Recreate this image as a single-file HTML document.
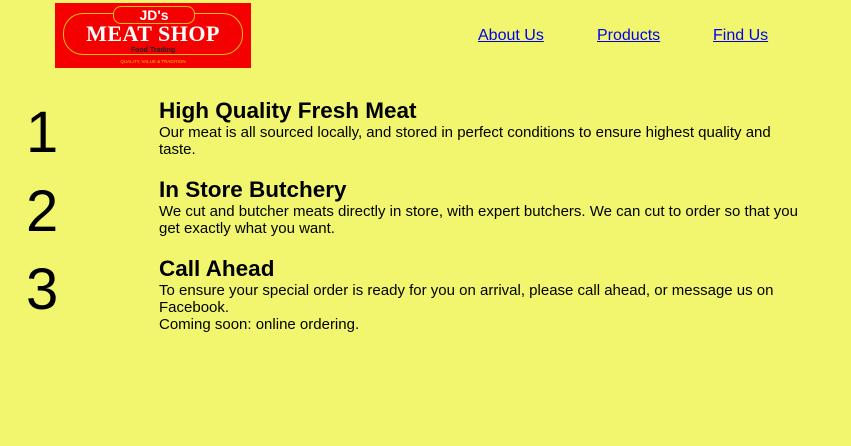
<!DOCTYPE html>
<html><head><meta charset="utf-8"><style>
body{margin:0;width:851px;height:446px;background:#f1f66e;font-family:"Liberation Sans",Arial,sans-serif;position:relative;overflow:hidden;color:#000}
.logo{position:absolute;left:55px;top:3px;width:196px;height:65px;background:#f40000;}
.oval{position:absolute;left:8px;top:10px;width:178px;height:40px;border:1px solid #f5c000;border-radius:20px}
.top{position:absolute;left:58px;top:3px;width:80px;height:16px;border:1px solid #f5c000;border-radius:8px;background:#f40000;color:#fff;font-weight:bold;font-size:14px;text-align:center;line-height:16px}
.ms{position:absolute;left:0;width:196px;top:19px;text-align:center;color:#fff;font-family:"Liberation Serif",serif;font-weight:bold;font-size:22px;letter-spacing:0.5px;line-height:24px}
.ft{position:absolute;left:0;width:196px;top:44px;text-align:center;color:#222;font-size:7px;font-weight:bold}
.q{position:absolute;left:0;width:196px;top:56px;text-align:center;color:#f5c000;font-size:4.5px}
nav a{position:absolute;top:27px;font-size:16px;color:#0000ee;text-decoration:underline}
.n{position:absolute;left:26px;font-size:58px;line-height:58px}
.s{position:absolute;left:159px;width:645px}
.s h2{margin:0;font-size:22.5px;font-weight:bold;line-height:26px}
.s p{margin:0;font-size:15px;line-height:17px}
</style></head><body>
<div class="logo"><div class="oval"></div><div class="top">JD's</div><div class="ms">MEAT SHOP</div><div class="ft">Food Trading</div><div class="q">QUALITY, VALUE &amp; TRADITION</div></div>
<nav><a style="left:478px">About Us</a><a style="left:597px">Products</a><a style="left:713px">Find Us</a></nav>
<div class="n" style="top:104px">1</div>
<div class="s" style="top:98px"><h2>High Quality Fresh Meat</h2><p>Our meat is all sourced locally, and stored in perfect conditions to ensure highest quality and taste.</p></div>
<div class="n" style="top:183px">2</div>
<div class="s" style="top:177px"><h2>In Store Butchery</h2><p>We cut and butcher meats directly in store, with expert butchers. We can cut to order so that you get exactly what you want.</p></div>
<div class="n" style="top:261px">3</div>
<div class="s" style="top:256px"><h2>Call Ahead</h2><p>To ensure your special order is ready for you on arrival, please call ahead, or message us on Facebook.<br>Coming soon: online ordering.</p></div>
</body></html>
